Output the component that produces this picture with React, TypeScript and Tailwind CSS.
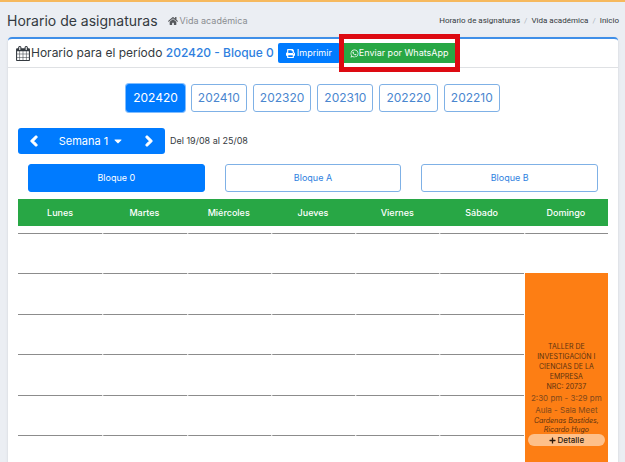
import { FaChevronLeft, FaChevronRight, FaHome, FaPlus, FaPrint, FaWhatsapp, FaCaretDown } from "react-icons/fa";

const periods = ["202420", "202410", "202320", "202310", "202220", "202210"];
const blocks = ["Bloque 0", "Bloque A", "Bloque B"];
const days = ["Lunes", "Martes", "Miércoles", "Jueves", "Viernes", "Sábado", "Domingo"];
const weekdays = days.slice(0, 6);
const slots = [0, 1, 2, 3, 4, 5, 6];

const cell = "border-t border-l-2 border-t-[#8c8c8c] border-l-white bg-clip-padding first:border-l-0";

function CalendarIcon() {
  return (
    <svg viewBox="64 0 1664 1792" className="h-[15px] w-[14px] shrink-0 fill-[#343a40]" aria-hidden="true">
      <path d="M192 1664h288v-288h-288v288zm352 0h320v-288h-320v288zm-352-352h288v-320h-288v320zm352 0h320v-320h-320v320zm-352-384h288v-288h-288v288zm736 736h320v-288h-320v288zm-384-736h320v-288h-320v288zm768 736h288v-288h-288v288zm-384-352h320v-320h-320v320zm-352-864v-288q0-13-9.5-22.5t-22.5-9.5h-64q-13 0-22.5 9.5t-9.5 22.5v288q0 13 9.5 22.5t22.5 9.5h64q13 0 22.5-9.5t9.5-22.5zm736 864h288v-320h-288v320zm-384-384h320v-288h-320v288zm384 0h288v-288h-288v288zm32-480v-288q0-13-9.5-22.5t-22.5-9.5h-64q-13 0-22.5 9.5t-9.5 22.5v288q0 13 9.5 22.5t22.5 9.5h64q13 0 22.5-9.5t9.5-22.5zm384-64v1280q0 52-38 90t-90 38h-1408q-52 0-90-38t-38-90v-1280q0-52 38-90t90-38h128v-96q0-66 47-113t113-47h64q66 0 113 47t47 113v96h384v-96q0-66 47-113t113-47h64q66 0 113 47t47 113v96h128q52 0 90 38t38 90z" />
    </svg>
  );
}

function EventCell() {
  return (
    <td rowSpan={6} className="border-l border-white bg-[#fd7e14] bg-clip-padding px-[3px] pt-0 pb-px text-center align-middle text-[#5c3210]">
      <p className="text-[7px] leading-[10px]">
        TALLER DE
        <br />
        INVESTIGACIÓN I
        <br />
        CIENCIAS DE LA
        <br />
        EMPRESA
        <br />
        NRC: 20737
      </p>
      <p className="text-[8px] leading-3 whitespace-nowrap text-[#82491b]">
        2:30 pm - 3:29 pm
        <br />
        Aula - Sala Meet
      </p>
      <p className="text-[7px] leading-[9px] italic">
        Cardenas Bastides,
        <br />
        Ricardo Hugo
      </p>
      <button type="button" className="flex h-3 w-full items-center justify-center gap-[2px] rounded-full bg-[#fec08a] text-[8px] font-medium text-[#2b1a0c]">
        <FaPlus className="size-[7px]" />
        Detalle
      </button>
    </td>
  );
}

export default function App() {
  return (
    <div className="h-screen overflow-hidden border-t-2 border-[#f6b95e] bg-[#ebeef3] font-['Inter','Liberation_Sans',sans-serif] text-[#343a40]">
      <header className="flex h-[35px] items-center justify-between pt-[2px] pr-[6px] pl-[7px]">
        <h1 className="flex items-center gap-[10px] text-[14px] leading-5">
          Horario de asignaturas
          <small className="flex items-center gap-[2px] text-[9px] text-[#8a8d91]">
            <FaHome className="size-[10px] text-[#55585c]" />
            Vida académica
          </small>
        </h1>
        <nav aria-label="Ruta" className="font-['Roboto','Liberation_Sans',sans-serif] text-[8px] leading-3">
          <ol className="flex gap-1">
            <li><a href="#horario">Horario de asignaturas</a></li>
            <li className="text-[#adb5bd]" aria-hidden="true">/</li>
            <li><a href="#vida">Vida académica</a></li>
            <li className="text-[#adb5bd]" aria-hidden="true">/</li>
            <li><a href="#inicio">Inicio</a></li>
          </ol>
        </nav>
      </header>

      <main className="mr-[7px] ml-2 rounded-t-sm border-t-2 border-[#3f8fe8] bg-white shadow-sm">
        <div className="flex h-[29px] items-center border-b border-[#dfe1e4] pl-2">
          <CalendarIcon />
          <h2 className="ml-px text-[12px] leading-5 whitespace-nowrap">
            Horario para el período <span className="font-medium text-[#2f7fe0]">202420 - Bloque 0</span>
          </h2>
          <button type="button" className="ml-1 flex h-5 items-center gap-[2px] rounded-xs bg-[#007bff] px-2 text-[9px] text-white">
            <FaPrint className="size-[9px]" />
            Imprimir
          </button>
          <div className="relative ml-1">
            <button type="button" className="flex h-5 items-center bg-[#28a745] px-[6px] text-[9px] whitespace-nowrap text-white">
              <FaWhatsapp className="size-[9px]" />
              Enviar por WhatsApp
            </button>
            <span className="pointer-events-none absolute -inset-x-[5px] -inset-y-[9px] border-[5px] border-[#dd0a12]" />
          </div>
        </div>

        <div className="px-[10px]">
          <div className="flex justify-center gap-[6px] pt-4">
            {periods.map((p, i) => (
              <button
                key={p}
                type="button"
                className={
                  i === 0
                    ? "h-7 rounded-[3px] border border-[#007bff] bg-[#007bff] px-[6px] text-[12px] text-white ring-1 ring-[#80bdff]"
                    : "h-7 rounded-[3px] border border-[#7fb1e6] bg-white px-[6px] text-[12px] text-[#4a86cf]"
                }
              >
                {p}
              </button>
            ))}
          </div>

          <div className="mt-4 flex items-center gap-[5px]">
            <div className="flex h-[26px] w-[147px] items-center justify-between rounded-[3px] bg-[#007bff] px-[10px] text-white">
              <button type="button" aria-label="Semana anterior"><FaChevronLeft className="size-3 stroke-current stroke-[50]" /></button>
              <button type="button" className="flex items-center gap-1 text-[11px] leading-4">
                Semana 1
                <FaCaretDown className="size-3" />
              </button>
              <button type="button" aria-label="Semana siguiente"><FaChevronRight className="size-3 stroke-current stroke-[50]" /></button>
            </div>
            <span className="text-[9px] leading-4">Del 19/08 al 25/08</span>
          </div>

          <div className="mt-[10px] grid grid-cols-3 gap-5 px-[10px]">
            {blocks.map((b, i) => (
              <button
                key={b}
                type="button"
                className={
                  i === 0
                    ? "h-7 rounded-[3px] border border-[#007bff] bg-[#007bff] text-[9px] text-white"
                    : "h-7 rounded-[3px] border border-[#7fb1e6] bg-white text-[9px] text-[#2f7fe0]"
                }
              >
                {b}
              </button>
            ))}
          </div>

          <table className="mt-[7px] w-full table-fixed border-separate border-spacing-0">
            <thead>
              <tr className="h-[27px] bg-[#28a745] text-[9px] text-white">
                {days.map((d) => (
                  <th key={d} scope="col" className="p-0 text-center font-medium">{d}</th>
                ))}
              </tr>
            </thead>
            <tbody>
              <tr className="h-[7px]"><td colSpan={7} className="p-0" /></tr>
              {slots.map((s) => (
                <tr key={s} className="odd:h-[41px] even:h-10">
                  {weekdays.map((d) => (
                    <td key={d} className={cell} />
                  ))}
                  {s === 0 && <td className={cell} />}
                  {s === 1 && <EventCell />}
                </tr>
              ))}
            </tbody>
          </table>
        </div>
      </main>
    </div>
  );
}
